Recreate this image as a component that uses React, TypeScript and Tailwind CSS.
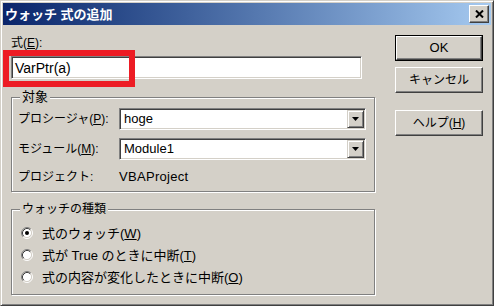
import React from "react";

const font = "font-['Liberation_Sans','Noto_Sans_CJK_JP',sans-serif]";
const sunken =
  "border border-t-[#808080] border-l-[#808080] border-r-white border-b-white shadow-[inset_1px_1px_0_#404040,inset_-1px_-1px_0_#d4d0c8]";
const raised =
  "border border-t-white border-l-white border-r-[#404040] border-b-[#404040] shadow-[inset_-1px_-1px_0_#808080]";
const etched =
  "border border-[#808080] shadow-[inset_1px_1px_0_#ffffff,1px_1px_0_#ffffff]";

const Radio = ({ checked }: { checked?: boolean }) => (
  <svg width="12" height="12" viewBox="0 0 12 12" className="shrink-0">
    <circle cx="6" cy="6" r="4.5" fill="#ffffff" />
    <path d="M2.11 9.89 A5.5 5.5 0 0 1 9.89 2.11" fill="none" stroke="#808080" />
    <path d="M9.89 2.11 A5.5 5.5 0 0 1 2.11 9.89" fill="none" stroke="#ffffff" />
    <path d="M2.82 9.18 A4.5 4.5 0 0 1 9.18 2.82" fill="none" stroke="#404040" />
    <path d="M9.18 2.82 A4.5 4.5 0 0 1 2.82 9.18" fill="none" stroke="#d4d0c8" />
    {checked && <circle cx="6" cy="6" r="2" fill="#000000" />}
  </svg>
);

const Combo = ({ value }: { value: string }) => (
  <div className={`w-[247px] h-[22px] bg-white flex items-center ${sunken} p-[1px]`}>
    <span className="flex-1 pl-[3px] text-[13px] leading-[16px] text-black">{value}</span>
    <div className="w-[17px] h-[18px] bg-[#d4d0c8] border border-t-[#d4d0c8] border-l-[#d4d0c8] border-r-[#404040] border-b-[#404040] shadow-[inset_1px_1px_0_#ffffff,inset_-1px_-1px_0_#808080] flex items-center justify-center">
      <svg width="7" height="4" viewBox="0 0 7 4">
        <path d="M0 0 H7 L3.5 4 Z" fill="#000000" />
      </svg>
    </div>
  </div>
);

const Button = ({ children }: { children: React.ReactNode }) => (
  <div className={`w-[88px] h-[26px] bg-[#d4d0c8] ${raised} flex items-center justify-center text-[12px] leading-[14px] text-black`}>
    {children}
  </div>
);

export default function App() {
  return (
    <div
      className={`w-[494px] h-[306px] bg-[#d4d0c8] border border-t-[#d4d0c8] border-l-[#d4d0c8] border-r-[#404040] border-b-[#404040] shadow-[inset_1px_1px_0_#ffffff,inset_-1px_-1px_0_#808080] p-[2px] flex flex-col ${font}`}
    >
      <div className="h-[22px] bg-linear-to-r from-[#0a246a] to-[#a6caf0] flex items-center justify-between pl-[2px] pr-[2px]">
        <span className="text-white font-bold text-[13px] leading-[15px]">ウォッチ 式の追加</span>
        <div className={`w-[20px] h-[18px] bg-[#d4d0c8] ${raised} flex items-center justify-center`}>
          <svg width="9" height="8" viewBox="0 0 9 8">
            <path d="M1 0.5 L8 7.5 M8 0.5 L1 7.5" stroke="#000000" strokeWidth="2" />
          </svg>
        </div>
      </div>

      <div className="flex pl-[8px]">
        <div className="relative w-[364px] flex flex-col">
          <div className="mt-[11px] text-[12px] leading-[14px] text-black">
            式(<u>E</u>):
          </div>
          <div className={`mt-[6px] w-[351px] h-[23px] bg-white ${sunken} flex items-center pl-[3px]`}>
            <span className="text-[14px] leading-[16px] text-black">VarPtr(a)</span>
          </div>
          <div className="absolute left-[-8px] top-[25px] w-[132px] h-[37px] border-[6px] border-[#ed1c24]" />

          <fieldset className={`mt-[11px] h-[102px] ${etched} px-[6px] pt-[4px]`}>
            <legend className="ml-[2px] px-[2px] bg-[#d4d0c8] text-[13px] leading-[14px] text-black">対象</legend>
            <div className="flex items-center h-[22px]">
              <span className="w-[101px] text-[12px] leading-[14px] text-black">
                プロシージャ(<u>P</u>):
              </span>
              <Combo value="hoge" />
            </div>
            <div className="flex items-center h-[22px] mt-[8px]">
              <span className="w-[101px] text-[12px] leading-[14px] text-black">
                モジュール(<u>M</u>):
              </span>
              <Combo value="Module1" />
            </div>
            <div className="flex items-center h-[18px] mt-[8px]">
              <span className="w-[101px] text-[12px] leading-[14px] text-black">プロジェクト:</span>
              <span className="text-[13px] leading-[16px] text-black tracking-[0.3px]">VBAProject</span>
            </div>
          </fieldset>

          <fieldset className={`mt-[10px] h-[93px] ${etched} pl-[9px] pt-[6px]`}>
            <legend className="ml-[-1px] px-[2px] bg-[#d4d0c8] text-[12px] leading-[14px] text-black">ウォッチの種類</legend>
            <div className="flex items-center h-[22px] gap-[9px] text-[13px] leading-[15px] text-black">
              <Radio checked />
              <span>
                式のウォッチ(<u>W</u>)
              </span>
            </div>
            <div className="flex items-center h-[22px] gap-[9px] text-[13px] leading-[15px] text-black">
              <Radio />
              <span>
                式が True のときに中断(<u>T</u>)
              </span>
            </div>
            <div className="flex items-center h-[22px] gap-[9px] text-[13px] leading-[15px] text-black">
              <Radio />
              <span>
                式の内容が変化したときに中断(<u>O</u>)
              </span>
            </div>
          </fieldset>
        </div>

        <div className="ml-[20px] flex flex-col">
          <div className="mt-[10px] w-[88px] h-[26px] border border-black">
            <div className={`w-full h-full bg-[#d4d0c8] ${raised} flex items-center justify-center text-[13px] leading-[14px] text-black`}>
              OK
            </div>
          </div>
          <div className="mt-[6px]">
            <Button>キャンセル</Button>
          </div>
          <div className="mt-[17px]">
            <Button>
              ヘルプ(<u>H</u>)
            </Button>
          </div>
        </div>
      </div>
    </div>
  );
}
